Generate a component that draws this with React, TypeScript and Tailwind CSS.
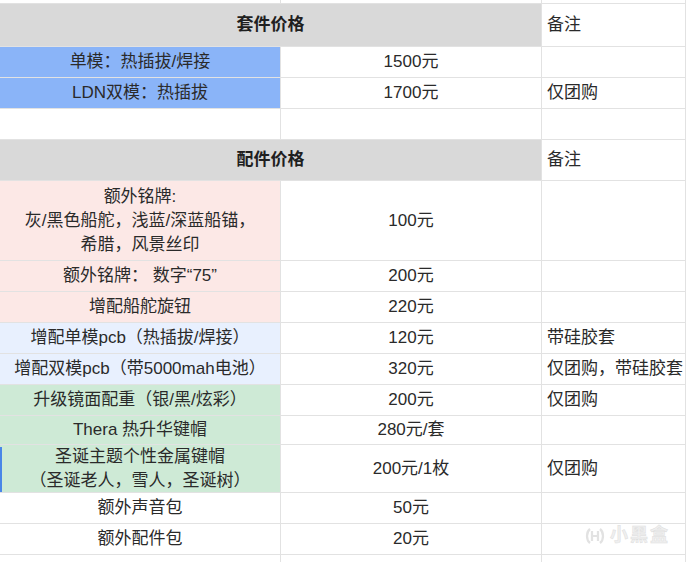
import React from 'react';

type Row = {
  h: string;
  a?: React.ReactNode;
  b?: React.ReactNode;
  c?: React.ReactNode;
  bg?: string;
  header?: boolean;
  mark?: boolean;
};

const rows: Row[] = [
  { h: 'h-[43px]', a: '套件价格', c: '备注', header: true },
  { h: 'h-[31px]', a: '单模：热插拔/焊接', b: '1500元', bg: 'bg-[#8ab4f8]' },
  { h: 'h-[31px]', a: 'LDN双模：热插拔', b: '1700元', c: '仅团购', bg: 'bg-[#8ab4f8]' },
  { h: 'h-[31px]' },
  { h: 'h-[41px]', a: '配件价格', c: '备注', header: true },
  {
    h: 'h-[80px]',
    a: (
      <>
        额外铭牌:
        <br />
        灰/黑色船舵，浅蓝/深蓝船锚，
        <br />
        希腊，风景丝印
      </>
    ),
    b: '100元',
    bg: 'bg-[#fce8e6]',
  },
  { h: 'h-[31px]', a: '额外铭牌： 数字“75”', b: '200元', bg: 'bg-[#fce8e6]' },
  { h: 'h-[31px]', a: '增配船舵旋钮', b: '220元', bg: 'bg-[#fce8e6]' },
  { h: 'h-[31px]', a: '增配单模pcb（热插拔/焊接）', b: '120元', c: '带硅胶套', bg: 'bg-[#e8f0fe]' },
  { h: 'h-[31px]', a: '增配双模pcb（带5000mah电池）', b: '320元', c: '仅团购，带硅胶套', bg: 'bg-[#e8f0fe]' },
  { h: 'h-[31px]', a: '升级镜面配重（银/黑/炫彩）', b: '200元', c: '仅团购', bg: 'bg-[#ceead6]' },
  { h: 'h-[29px]', a: 'Thera 热升华键帽', b: '280元/套', bg: 'bg-[#ceead6]' },
  {
    h: 'h-[48px]',
    a: (
      <>
        圣诞主题个性金属键帽
        <br />
        （圣诞老人，雪人，圣诞树）
      </>
    ),
    b: '200元/1枚',
    c: '仅团购',
    bg: 'bg-[#ceead6]',
    mark: true,
  },
  { h: 'h-[31px]', a: '额外声音包', b: '50元' },
  { h: 'h-[31px]', a: '额外配件包', b: '20元' },
  { h: 'h-[8px]' },
];

function TableRow({ row }: { row: Row }) {
  if (row.header) {
    return (
      <div className={`flex ${row.h}`}>
        <div className="w-[542px] flex items-center justify-center bg-[#d9d9d9] border-r border-b border-[#e2e2e2] font-bold text-[#1f1f1f]">
          {row.a}
        </div>
        <div className="w-[144px] flex items-center pl-[5px] border-r border-b border-[#e2e2e2]">
          {row.c}
        </div>
      </div>
    );
  }
  return (
    <div className={`flex ${row.h}`}>
      <div
        className={`relative w-[281px] flex items-center justify-center text-center leading-[24px] whitespace-nowrap border-r border-b border-[#e2e2e2] ${row.bg ?? ''}`}
      >
        {row.mark && <div className="absolute left-0 top-[2px] bottom-0 w-[2px] bg-[#4a86e8]" />}
        {row.a}
      </div>
      <div className="w-[261px] flex items-center justify-center border-r border-b border-[#e2e2e2]">
        {row.b}
      </div>
      <div className="w-[144px] flex items-center pl-[5px] whitespace-nowrap border-r border-b border-[#e2e2e2]">
        {row.c}
      </div>
    </div>
  );
}

export default function App() {
  return (
    <div
      className="relative w-[689px] h-[562px] overflow-hidden bg-white text-[17px] text-[#2a2a2a]"
      style={{ fontFamily: '"Liberation Sans", "Noto Sans CJK SC", sans-serif' }}
    >
      <div className="flex h-[4px]">
        <div className="w-[281px] border-r border-b border-[#e2e2e2]" />
        <div className="w-[261px] border-r border-b border-[#e2e2e2]" />
        <div className="w-[144px] border-r border-b border-[#e2e2e2]" />
      </div>
      {rows.map((r, i) => (
        <TableRow key={i} row={r} />
      ))}

      {/* watermark */}
      <div className="absolute left-[584px] top-[522px] flex items-center gap-[4px] opacity-60">
        <svg width="22" height="22" viewBox="0 0 22 22" fill="none" stroke="#cfcfcf" strokeWidth="2.2">
          <path d="M6 4 C2 7 2 15 6 18" />
          <path d="M16 4 C20 7 20 15 16 18" />
          <path d="M8 6 V16 M14 6 V16 M8 11 H14" />
        </svg>
        <span className="text-[18px] font-bold text-[#e6e6e6] tracking-[2px]" style={{ WebkitTextStroke: '0.5px #c8c8c8' }}>
          小黑盒
        </span>
      </div>
    </div>
  );
}
